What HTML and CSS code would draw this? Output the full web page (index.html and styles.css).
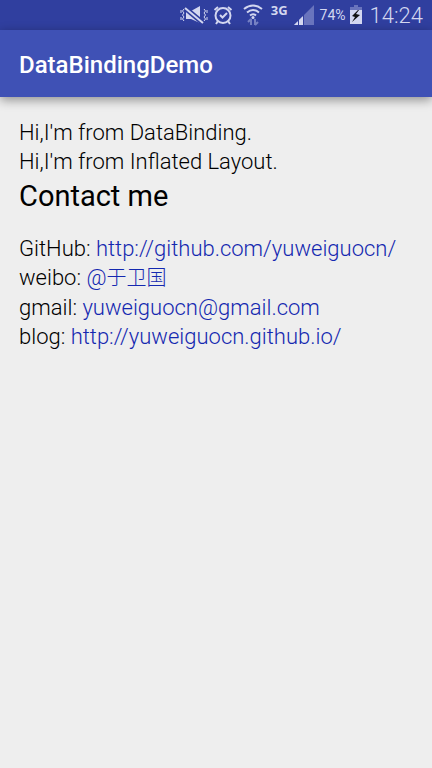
FILE: index.html
```html
<!DOCTYPE html>
<html lang="en">
<head>
<meta charset="utf-8">
<meta name="viewport" content="width=device-width, initial-scale=1">
<title>DataBindingDemo</title>
<link rel="stylesheet" href="styles.css">
</head>
<body>
<div class="status-bar">
  <svg class="mute" width="28" height="20" viewBox="0 0 28 20" aria-hidden="true">
    <path d="M6 6h5l9-5v17l-9-4H6z" fill="currentColor"/>
    <path class="slash-gap" d="M5 3l18 15"/>
    <path class="line" d="M5 3l18 15"/>
    <path class="wave" d="M4 4L2.500 6 4 8 2.500 10 4 12 2.500 14 4 16M1 5v3M1 12v3M24 4l1.500 2L24 8l1.500 2L24 12l1.500 2L24 16M27 5v3M27 12v3"/>
  </svg>
  <svg class="alarm" width="20" height="20" viewBox="0 0 20 20" aria-hidden="true">
    <circle class="line" cx="10" cy="10.500" r="7.500"/>
    <path class="line" d="M1.500 5L5 2M15 2l3.500 3M5 16l-2 3M15 16l2 3M7 10l2.500 2.500L14 8"/>
  </svg>
  <svg class="wifi" width="20" height="22" viewBox="0 0 20 22" aria-hidden="true">
    <path class="line" d="M1 5q9-7 18 0M4 8.500q6-5 12 0M7 11.500q3-2.500 6 0"/>
    <circle cx="10" cy="13.500" r="1.500" fill="currentColor"/>
    <path class="traffic" d="M8 21v-6M5 18l3-3M12 15v6M15 18l-3 3"/>
  </svg>
  <span class="network">3G</span>
  <svg class="signal" width="20" height="20" viewBox="0 0 20 20" aria-hidden="true">
    <path class="dim" d="M0 20L20 0v20z"/>
    <path class="gap" d="M4 20v-5M9 20V10"/>
    <path d="M0 20l4-4v4zM5 20v-5l4-4v9z" fill="currentColor"/>
  </svg>
  <span class="percent">74%</span>
  <svg class="battery" width="12" height="20" viewBox="0 0 12 20" aria-hidden="true">
    <path class="dim" d="M4 0h4v2h4v4H0V2h4z"/>
    <path d="M0 5h12v14H0z" fill="currentColor"/>
    <path class="bolt" d="M8 5L2 11l3 1-3 5 8-7-4-1 3-4z"/>
  </svg>
  <time class="clock">14:24</time>
</div>
<header class="app-bar"><h1>DataBindingDemo</h1></header>
<main class="content">
  <p>Hi,I'm from DataBinding.</p>
  <p>Hi,I'm from Inflated Layout.</p>
  <h2>Contact me</h2>
  <p>GitHub: <a href="http://github.com/yuweiguocn/">http://github.com/yuweiguocn/</a></p>
  <p>weibo: <a href="#weibo">@<span class="han" lang="zh">于卫国</span></a></p>
  <p>gmail: <a href="mailto:yuweiguocn@gmail.com">yuweiguocn@gmail.com</a></p>
  <p>blog: <a href="http://yuweiguocn.github.io/">http://yuweiguocn.github.io/</a></p>
</main>
</body>
</html>
```
FILE: styles.css
```css
* {
  box-sizing: border-box;
}

body {
  margin: 0;
  min-height: 100vh;
  background: #eeeeee;
  color: #000000;
  font: 22px/29px Roboto, "Noto Sans CJK SC", sans-serif;
}

h1, h2, p {
  margin: 0;
}

.status-bar {
  display: flex;
  align-items: center;
  justify-content: flex-end;
  height: 30px;
  padding-right: 9px;
  background: #303f9f;
  color: #d3d7f0;
  line-height: 20px;
}

.status-bar svg {
  flex: none;
}

.mute {
  margin-right: 5px;
}

.alarm {
  margin-right: 10px;
}

.wifi {
  margin-right: 8px;
}

.line, .wave, .slash-gap, .traffic, .gap {
  fill: none;
  stroke: currentColor;
  stroke-width: 2;
}

.wave {
  stroke-width: 1;
}

.slash-gap {
  stroke: #303f9f;
  stroke-width: 5;
}

.gap {
  stroke: #303f9f;
}

.traffic {
  stroke: #7681c3;
}

.dim {
  fill: #6974bd;
}

.bolt {
  fill: #111111;
}

.network {
  align-self: flex-start;
  margin-right: 6px;
  font: 700 13px/20px "Open Sans", sans-serif;
}

.signal {
  margin-right: 6px;
}

.percent {
  margin-right: 4px;
  font-size: 14px;
}

.battery {
  margin-right: 8px;
}

.clock {
  font-size: 22px;
  font-weight: 300;
  line-height: 30px;
  padding-top: 2px;
}

.app-bar {
  display: flex;
  align-items: center;
  height: 67px;
  padding: 2px 19px 0;
  background: #3f51b5;
  box-shadow: 0 3px 10px rgba(0, 0, 0, 0.4);
  color: #ffffff;
}

.app-bar h1 {
  font-size: 24px;
  font-weight: 500;
  line-height: 30px;
}

.content {
  padding: 21px 19px;
  font-weight: 300;
}

.content h2 {
  margin-bottom: 18px;
  font-size: 29px;
  font-weight: 400;
  line-height: 40px;
}

.content a {
  color: #1428b0;
  text-decoration: none;
}

.content .han {
  font-size: 20px;
}
```
